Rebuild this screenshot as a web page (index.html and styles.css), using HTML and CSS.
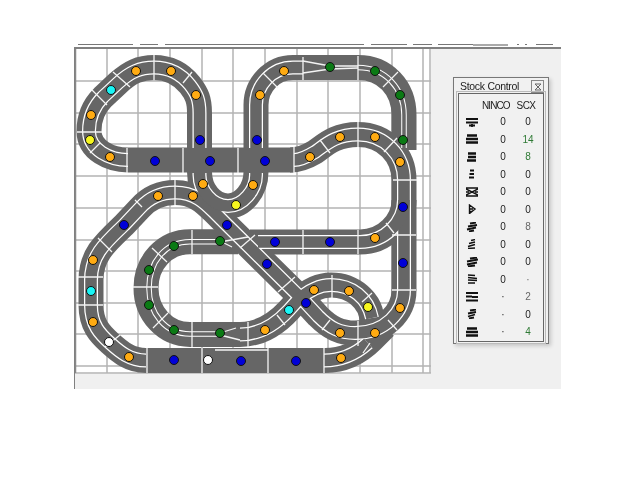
FILE: index.html
```html
<!DOCTYPE html>
<html lang="en">
<head>
<meta charset="utf-8">
<title>Stock Control</title>
<link rel="stylesheet" href="styles.css">
</head>
<body>
<div class="app">
  <div class="menubar">
    <span class="seg s1"></span><span class="seg s2"></span><span class="seg s3"></span><span class="seg s4"></span><span class="seg s5"></span><span class="seg s6"></span><span class="seg dotted s7"></span><span class="seg s8"></span><span class="seg s9"></span><span class="seg s10"></span>
  </div>
  <div class="workspace">
    <svg class="canvas" width="356" height="325" viewBox="75 49 356 325">
      <defs>
        <g id="gray">
          <path d="M146 360.500C130 360.500 120 352 110 343C100 334 91 325 91 305V280C91 255 105 243 124 225L140 208C150 197 162 192.500 175 192.500C195 192.500 205 203 215 213L227 225L306 303L318 316C330 328 340 333 355 333C385 333 404 312 404 290V180C404 155 385 134.500 358 134.500C335 134.500 325 145 315 152C305 158 298 160 290 160"/>
          <path d="M128 160C110 160 89 150 89 131C89 115 95 105 103 97L118 83C130 72 140 67.500 154 67.500C170 67.500 182 75 190 85C197 94 199.500 100 199.500 113V172C199.500 190 212 206 228 206C243 206 256 190 256 172V105C256 85 272 67.500 293 67.500H358C385 67.500 404 88 404 115V150"/>
          <path d="M128 160H294"/>
          <path d="M146 360.500H325C345 360.500 360 352 372 340L385 327"/>
          <path d="M250 242H360C385 242 404 222 404 200"/>
          <path d="M238 241.700H190C165 241.700 146 262 146 288C146 313 165 334.500 190 334.500H240C262 334.500 278 322 289 310L298 300C310 289 320 285 331 285C352 285 372 300 372 322"/>
        </g>
        <g id="wide">
          <path d="M146 360.500C130 360.500 120 352 110 343C100 334 91 325 91 305V280C91 255 105 243 124 225L140 208C150 197 162 192.500 175 192.500C195 192.500 205 203 215 213L227 225L306 303L318 316C330 328 340 333 355 333C385 333 404 312 404 290V180C404 155 385 134.500 358 134.500C335 134.500 325 145 315 152C305 158 298 160 294 160"/>
          <path d="M128 160C110 160 89 150 89 131C89 115 95 105 103 97L118 83C130 72 140 67.500 154 67.500C170 67.500 182 75 190 85C197 94 199.500 100 199.500 113V148M199.500 173V175C199.500 190 212 206 228 206C243 206 256 190 256 175V173M256 148V105C256 85 272 67.500 293 67.500H303"/>
          <path d="M258 242H360C385 242 404 222 404 200"/>
          <path d="M240 334.500C262 334.500 278 322 289 310L298 300C310 289 320 285 331 285C352 285 368 298 372 318"/>
          <path d="M324 360.500C345 360.500 358 352 368 343"/>
        </g>
        <g id="narrow">
          <path d="M358 67.500C385 67.500 404 88 404 115V148"/>
          <path d="M220 241.700H190C165 241.700 149 262 149 288C149 313 165 334 190 334H220"/>
        </g>
      </defs>

      <g class="grid">
        <path d="M107 49V373M138 49V373M170 49V373M202 49V373M233 49V373M265 49V373M297 49V373M328 49V373M360 49V373M392 49V373M423 49V373M430 49V373"/>
        <path d="M75 81H431M75 113H431M75 144H431M75 176H431M75 208H431M75 240H431M75 271H431M75 303H431M75 334H431M75 366H431M75 373H431"/>
        <path class="edge" d="M75.500 49V373"/>
      </g>

      <use href="#gray" class="road"/>
      <use href="#wide" class="rail-w"/>
      <use href="#wide" class="rail-w-in"/>
      <use href="#narrow" class="rail-n"/>
      <use href="#narrow" class="rail-n-in"/>

      <path class="tie" d="M303 61L330 66L358 66M303 73L330 69L358 68"/>
      <path class="tie" d="M220 241L232 247M220 242L248 237M220 333L236 328M220 335L240 340"/>
      <path class="tie" d="M215 350H268"/>

      <path class="tie" d="M127 148V173M183 148V173M238 148V173M294 147V173M154 55V80M113 72L130 87M92 90L107 105M77 132H102M90 153L100 143M192 72L183 83M263 73L278 88M303 57V80M358 56V80M383 87L398 72M358 122V147M320 140L330 153M384 152L397 138M393 180H417M175 180V205M135 200L142 207M98 238L112 252M78 277H103M78 305H103M120 335L105 347M147 348V373M202 348V373M268 348V373M324 348V373M192 230V254M192 322V347M152 248L167 262M133 287H158M153 328L168 313M248 322V347M303 230V254M358 230V254M386 223L394 233M240 248L255 235M278 292L295 277M322 330L330 320M358 321V346M388 320L397 330M392 290H416M392 235H416M332 275V298M362 302L372 293M277 315L285 325M363 353L370 343"/>

      <g class="dot orange">
        <circle cx="136" cy="71" r="4.500"/><circle cx="171" cy="71" r="4.500"/><circle cx="196" cy="95" r="4.500"/><circle cx="91" cy="115" r="4.500"/><circle cx="110" cy="157" r="4.500"/><circle cx="260" cy="95" r="4.500"/><circle cx="203" cy="184" r="4.500"/><circle cx="253" cy="185" r="4.500"/><circle cx="158" cy="196" r="4.500"/><circle cx="193" cy="196" r="4.500"/><circle cx="284" cy="71" r="4.500"/><circle cx="340" cy="137" r="4.500"/><circle cx="375" cy="137" r="4.500"/><circle cx="400" cy="162" r="4.500"/><circle cx="310" cy="157" r="4.500"/><circle cx="93" cy="260" r="4.500"/><circle cx="93" cy="322" r="4.500"/><circle cx="129" cy="357" r="4.500"/><circle cx="265" cy="330" r="4.500"/><circle cx="375" cy="238" r="4.500"/><circle cx="400" cy="308" r="4.500"/><circle cx="375" cy="333" r="4.500"/><circle cx="340" cy="333" r="4.500"/><circle cx="341" cy="358" r="4.500"/><circle cx="314" cy="290" r="4.500"/><circle cx="349" cy="291" r="4.500"/>
      </g>
      <g class="dot blue">
        <circle cx="155" cy="161" r="4.500"/><circle cx="210" cy="161" r="4.500"/><circle cx="265" cy="161" r="4.500"/><circle cx="200" cy="140" r="4.500"/><circle cx="257" cy="140" r="4.500"/><circle cx="403" cy="207" r="4.500"/><circle cx="124" cy="225" r="4.500"/><circle cx="174" cy="360" r="4.500"/><circle cx="241" cy="361" r="4.500"/><circle cx="296" cy="361" r="4.500"/><circle cx="227" cy="225" r="4.500"/><circle cx="275" cy="242" r="4.500"/><circle cx="330" cy="242" r="4.500"/><circle cx="403" cy="263" r="4.500"/><circle cx="267" cy="264" r="4.500"/><circle cx="306" cy="303" r="4.500"/>
      </g>
      <g class="dot green">
        <circle cx="330" cy="67" r="4.500"/><circle cx="375" cy="71" r="4.500"/><circle cx="400" cy="95" r="4.500"/><circle cx="403" cy="140" r="4.500"/><circle cx="174" cy="246" r="4.500"/><circle cx="149" cy="270" r="4.500"/><circle cx="149" cy="305" r="4.500"/><circle cx="174" cy="330" r="4.500"/><circle cx="220" cy="333" r="4.500"/><circle cx="220" cy="241" r="4.500"/>
      </g>
      <g class="dot cyan">
        <circle cx="111" cy="90" r="4.500"/><circle cx="91" cy="291" r="4.500"/><circle cx="289" cy="310" r="4.500"/>
      </g>
      <g class="dot yellow">
        <circle cx="90" cy="140" r="4.500"/><circle cx="236" cy="205" r="4.500"/><circle cx="368" cy="307" r="4.500"/>
      </g>
      <g class="dot white">
        <circle cx="109" cy="342" r="4.500"/><circle cx="208" cy="360" r="4.500"/>
      </g>
    </svg>
    <div class="bottom-band"></div>
  </div>

  <div class="stock">
    <div class="stock-title"><span>Stock Control</span><span class="close"><svg width="8" height="8" viewBox="0 0 8 8"><path d="M1 1H7L1 7H7ZM1 1L7 7M7 1L1 7" fill="none" stroke="#666"/></svg></span></div>
    <div class="stock-table">
      <div></div><div class="h-ninco">NINCO</div><div class="h-scx">SCX</div>

      <svg class="ico" viewBox="0 0 12 10"><path class="thick" d="M0 2H12M0 5.500H12M3 8.500H9M6 7V10"/></svg><div class="n">0</div><div class="s">0</div>
      <svg class="ico" viewBox="0 0 12 10"><path class="heavy" d="M1 1.500H11M0 5H12M0 8.500H12"/></svg><div class="n">0</div><div class="s g">14</div>
      <svg class="ico" viewBox="0 0 12 10"><path class="heavy" d="M2 1.500H10M2 5H10M1 8.500H10"/></svg><div class="n">0</div><div class="s g">8</div>
      <svg class="ico" viewBox="0 0 12 10"><path class="thick" d="M4 1.500H8M3.500 5H8M3 8.500H8"/></svg><div class="n">0</div><div class="s">0</div>
      <svg class="ico" viewBox="0 0 12 10"><path class="mid" d="M0 1H12M0 9H12M0 2L12 8M12 2L0 8M0 5H3M9 5H12"/></svg><div class="n">0</div><div class="s">0</div>
      <svg class="ico" viewBox="0 0 12 10"><path class="mid" d="M3.500 1L9 5L3.500 9.500ZM4 5H7M4 7.500H6"/></svg><div class="n">0</div><div class="s">0</div>
      <svg class="ico" viewBox="0 0 12 10"><path class="thick" d="M4 1.500L10 .500M2 4.500L11 3M1 7.500L10 5.500M3 9.500L8 8.500"/></svg><div class="n">0</div><div class="s m">8</div>
      <svg class="ico" viewBox="0 0 12 10"><path class="mid" d="M5 1.500L9 .500M3 4.500L9 3M2 7.500L9 5.500M2 9.500L9 9"/></svg><div class="n">0</div><div class="s">0</div>
      <svg class="ico" viewBox="0 0 12 10"><path class="thick" d="M4 1.500L11 .500M1 4.500L12 2.500M1 7.500L11 5.500M2 9.500L9 8.500"/></svg><div class="n">0</div><div class="s">0</div>
      <svg class="ico" viewBox="0 0 12 10"><path class="mid" d="M2 1L9 1.500M2 3.500L11 4.500M2 6L11 6.500M2 9H9"/></svg><div class="n">0</div><div class="s m">·</div>
      <svg class="ico" viewBox="0 0 12 10"><path class="thick" d="M0 1H12M0 4.500H6M6 5H12M0 8.500H12"/></svg><div class="n">·</div><div class="s m">2</div>
      <svg class="ico" viewBox="0 0 12 10"><path class="thick" d="M4 1.500L10 .500M2 4.500L10 3M2 7.500L9 5.500M3 9.500L8 8.500"/></svg><div class="n">·</div><div class="s">0</div>
      <svg class="ico" viewBox="0 0 12 10"><path class="heavy" d="M1 1.500H11M0 5H12M0 8.500H12"/></svg><div class="n">·</div><div class="s g">4</div>
    </div>
  </div>
</div>
</body>
</html>
```
FILE: styles.css
```css
html, body { margin: 0; padding: 0; background: #fff; }
.app { position: relative; width: 640px; height: 480px; overflow: hidden; font-family: "Liberation Sans", Arial, sans-serif; }

.menubar { display: flex; height: 0; padding-left: 78px; padding-top: 44px; margin-bottom: 3px; box-sizing: content-box; }
.seg { display: block; height: 1px; background: #777; margin-right: 7px; }
.s1 { width: 55px; } .s2 { width: 18px; } .s3 { width: 199px; } .s4 { width: 36px; margin-right: 6px; } .s5 { width: 19px; margin-right: 6px; }
.s6 { width: 35px; margin-right: 0; } .dotted { height: 2px; background: #aaa; }
.s7 { width: 35px; margin-right: 9px; } .s8 { width: 2px; margin-right: 6px; } .s9 { width: 2px; margin-right: 9px; } .s10 { width: 17px; margin-right: 0; }

.workspace { margin-left: 74px; width: 487px; height: 342px; background: #f0f0f0; border-top: 2px solid #808080; box-sizing: border-box; border-left: 1px solid #808080; }
.canvas { display: block; background: #fff; filter: blur(.35px); }
.bottom-band { height: 15px; }

.grid path { fill: none; stroke: #b4b4b4; stroke-width: 1.5; }
.grid .edge { stroke: #888; }

use { fill: none; }
.road { stroke: #666; stroke-width: 25; }
.rail-w { stroke: #fff; stroke-width: 14; }
.rail-w-in { stroke: #666; stroke-width: 11.5; }
.rail-n { stroke: #fff; stroke-width: 5.5; }
.rail-n-in { stroke: #666; stroke-width: 3.5; }
.tie { fill: none; stroke: #f4f4f4; stroke-width: 1.3; }

.dot circle { stroke: #111; stroke-width: 1; }
.orange circle { fill: #ffab12; }
.blue circle { fill: #0000d8; }
.green circle { fill: #0a7a14; }
.cyan circle { fill: #19f5f5; }
.yellow circle { fill: #f6f61e; }
.white circle { fill: #fff; }

.stock { position: absolute; left: 453px; top: 77px; width: 96px; height: 267px; box-sizing: border-box; background: #f1f1f1; border: 1px solid #777; padding: 0 4px 5px; box-shadow: 2px 2px 4px rgba(0,0,0,.18); display: flex; flex-direction: column; filter: blur(.25px); }
.stock-title { display: flex; justify-content: space-between; align-items: center; height: 17px; padding-left: 2px; font-size: 10.500px; letter-spacing: -.3px; color: #222; }
.close { display: flex; align-items: center; justify-content: center; width: 11px; height: 11px; border: 1px solid #888; margin-top: 2px; }
.stock-table { flex: 1; display: grid; grid-template-columns: 22px 34px 26px; grid-template-rows: 19px repeat(13, 17.500px); border: 1px solid #666; outline: 1px solid #bbb; outline-offset: 1px; font-size: 10px; color: #222; align-items: center; }
.h-ninco { padding: 3px 0 0 1px; letter-spacing: -.9px; }
.h-scx { text-align: center; padding: 3px 4px 0 0; letter-spacing: -.6px; }
.n { text-align: center; padding-left: 10px; color: #222; }
.s { text-align: center; color: #222; }
.g { color: #2f7a35; }
.m { color: #666; }
.ico { display: block; width: 12px; height: 10px; margin-left: 7px; fill: none; stroke: #111; stroke-width: 1.1; }
.heavy { stroke-width: 2.4; }
.thick { stroke-width: 1.8; }
.mid { stroke-width: 1.4; }
```
